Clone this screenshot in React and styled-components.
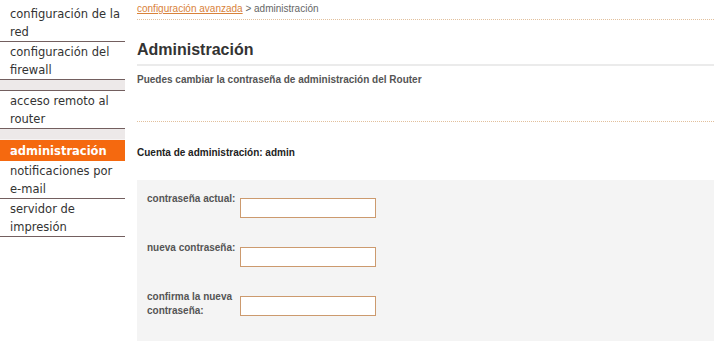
import React from "react";
import styled, { createGlobalStyle } from "styled-components";

const GlobalStyle = createGlobalStyle`
  html, body { margin: 0; padding: 0; background: #fff; }
  body { font-family: "Liberation Sans", Arial, sans-serif; }
`;

const Page = styled.div`
  display: flex;
  align-items: flex-start;
  width: 720px;
`;

const Sidebar = styled.nav`
  width: 125px;
  flex: none;
  padding-top: 4px;
  font-family: "DejaVu Sans", Verdana, sans-serif;
  font-size: 11.5px;
`;

const NavItem = styled.a`
  display: block;
  padding: ${(p) => (p.$active ? "2px 0 1px 10px" : "1px 0 0 10px")};
  line-height: 18px;
  color: ${(p) => (p.$active ? "#fff" : "#333")};
  background: ${(p) => (p.$active ? "#f5690f" : "transparent")};
  font-weight: ${(p) => (p.$active ? "bold" : "normal")};
  border-bottom: ${(p) => (p.$active ? "none" : "1px solid #735f5f")};
  text-decoration: none;
`;

const Spacer = styled.div`
  height: 10px;
  background: #ede9e9;
  border-bottom: 1px solid ${(p) => (p.$soft ? "#f6f3f3" : "#735f5f")};
`;

const Main = styled.main`
  width: 577px;
  margin-left: 12px;
  color: #333;
`;

const Breadcrumb = styled.div`
  font-size: 10px;
  line-height: 12px;
  padding: 3px 0 4px;
  color: #666;
  border-bottom: 1px dotted #e2c09c;
`;

const CrumbLink = styled.a`
  color: #d9823a;
  text-decoration: underline;
`;

const Title = styled.h1`
  margin: 20px 0 0;
  font-size: 16px;
  line-height: 20px;
  font-weight: bold;
  color: #333;
  padding-bottom: 4px;
  border-bottom: 2px solid #ebebeb;
`;

const Intro = styled.p`
  margin: 8px 0 0;
  font-size: 10px;
  line-height: 12px;
  font-weight: bold;
  color: #555;
  padding-bottom: 35px;
  border-bottom: 1px dotted #e2c09c;
`;

const Account = styled.p`
  margin: 25px 0 0;
  font-size: 10px;
  line-height: 12px;
  font-weight: bold;
  color: #222;
`;

const FormBox = styled.div`
  margin-top: 21px;
  background: #f4f4f4;
  padding: 12px 10px 40px;
  display: flex;
  flex-direction: column;
  gap: 23px;
`;

const Row = styled.div`
  display: flex;
  align-items: flex-start;
`;

const Label = styled.label`
  width: 91px;
  margin-right: 2px;
  font-size: 10px;
  line-height: 14px;
  font-weight: bold;
  color: #555;
`;

const Input = styled.input`
  box-sizing: border-box;
  margin: 6px 0 0;
  width: 136px;
  height: 20px;
  border: 1px solid #cc9a6e;
  background: #fff;
  padding: 0 3px;
  outline: none;
`;

const fields = [
  { id: "cur", label: "contraseña actual:" },
  { id: "new", label: "nueva contraseña:" },
  { id: "conf", label: "confirma la nueva contraseña:" },
];

export default function App() {
  return (
    <>
      <GlobalStyle />
      <Page>
        <Sidebar>
          <NavItem>configuración de la red</NavItem>
          <NavItem>configuración del firewall</NavItem>
          <Spacer />
          <NavItem>acceso remoto al router</NavItem>
          <Spacer $soft />
          <NavItem $active>administración</NavItem>
          <NavItem>notificaciones por e-mail</NavItem>
          <NavItem>servidor de impresión</NavItem>
        </Sidebar>
        <Main>
          <Breadcrumb>
            <CrumbLink>configuración avanzada</CrumbLink> &gt; administración
          </Breadcrumb>
          <Title>Administración</Title>
          <Intro>Puedes cambiar la contraseña de administración del Router</Intro>
          <Account>Cuenta de administración: admin</Account>
          <FormBox>
            {fields.map((f) => (
              <Row key={f.id}>
                <Label htmlFor={f.id}>{f.label}</Label>
                <Input id={f.id} type="password" />
              </Row>
            ))}
          </FormBox>
        </Main>
      </Page>
    </>
  );
}
